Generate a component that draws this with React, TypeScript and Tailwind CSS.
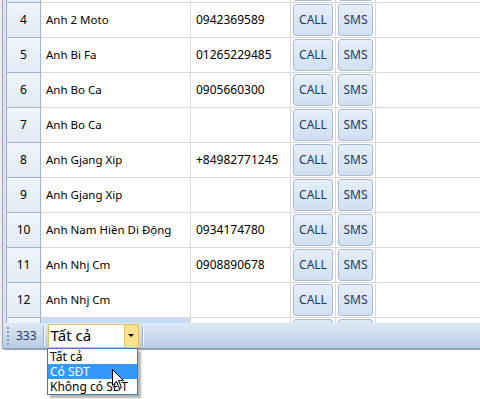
import React from 'react'

type Contact = { no: string; name: string; phone: string }

const rows: Contact[] = [
  { no: '', name: '', phone: '' },
  { no: '4', name: 'Anh 2 Moto', phone: '0942369589' },
  { no: '5', name: 'Anh Bi Fa', phone: '01265229485' },
  { no: '6', name: 'Anh Bo Ca', phone: '0905660300' },
  { no: '7', name: 'Anh Bo Ca', phone: '' },
  { no: '8', name: 'Anh Gjang Xip', phone: '+84982771245' },
  { no: '9', name: 'Anh Gjang Xip', phone: '' },
  { no: '10', name: 'Anh Nam Hiền Di Động', phone: '0934174780' },
  { no: '11', name: 'Anh Nhj Cm', phone: '0908890678' },
  { no: '12', name: 'Anh Nhj Cm', phone: '' },
  { no: '', name: '', phone: '' },
]

function GridButton({ label, className }: { label: string; className: string }) {
  return (
    <div
      className={`${className} h-full rounded-[3px] border border-[#aabcd5] bg-gradient-to-b from-[#e6eff9] to-[#d0dff0] flex items-center justify-center text-[#1e3a64] text-[12px]`}
    >
      {label}
    </div>
  )
}

function Row({ row, selected }: { row: Contact; selected?: boolean }) {
  return (
    <div className="flex h-[35px]">
      <div className="w-[35px] shrink-0 border-l border-r border-b border-[#9fb4d0] bg-gradient-to-b from-[#f0f5fb] to-[#e2eaf5] flex items-center justify-center text-[12px] text-black">
        {row.no}
      </div>
      <div
        className={`w-[150px] shrink-0 border-r border-b border-[#d9d9d9] flex items-center pl-[5px] text-[11.5px] text-black whitespace-nowrap ${
          selected ? 'bg-[#c4dcf6]' : ''
        }`}
      >
        {row.name}
      </div>
      <div className="w-[100px] shrink-0 border-r border-b border-[#d9d9d9] flex items-center pl-[5px] text-[12px] text-black">
        {row.phone}
      </div>
      <div className="w-[45px] shrink-0 border-r border-b border-[#d9d9d9] pl-[2px] py-[1px]">
        {row.no && <GridButton label="CALL" className="w-[40px]" />}
        {!row.no && <div className="w-[40px] h-full rounded-[3px] border border-[#aabcd5] bg-[#dde8f5]" />}
      </div>
      <div className="w-[40px] shrink-0 border-r border-b border-[#d9d9d9] pl-[2px] py-[1px]">
        {row.no && <GridButton label="SMS" className="w-[35px]" />}
        {!row.no && <div className="w-[35px] h-full rounded-[3px] border border-[#aabcd5] bg-[#dde8f5]" />}
      </div>
      <div className="flex-1 border-b border-[#d9d9d9]" />
    </div>
  )
}

export default function App() {
  return (
    <div className="relative w-[480px] h-[399px] bg-white overflow-hidden font-['Noto_Sans',sans-serif]">
      <div className="flex h-[350px]">
        <div className="w-[2px] shrink-0 bg-[#ececec]" />
        <div className="flex-1 flex flex-col border-l border-b border-[#9aa6b8] rounded-bl-[3px] overflow-hidden">
          <div className="flex h-[323px]">
            <div className="w-[3px] shrink-0 bg-[#dde2e8]" />
            <div className="flex-1 overflow-hidden">
              <div className="mt-[-32px]">
                {rows.map((r, i) => (
                  <Row key={i} row={r} selected={i === rows.length - 1} />
                ))}
              </div>
            </div>
          </div>
          <div className="flex items-center h-[26px] border-b border-[#8a9fbe] bg-gradient-to-b from-[#dfe9f6] to-[#b7cbe3]">
            <div className="flex flex-col gap-[2px] ml-[4px] w-[2px]">
              {[0, 1, 2, 3, 4].map((i) => (
                <div key={i} className="w-[2px] h-[2px] bg-[#8699b5]" />
              ))}
            </div>
            <span className="ml-[7px] text-[12px] text-[#243b63]">333</span>
            <div className="ml-[6px] h-[20px] w-[2px] border-l border-[#9aaec9] border-r-white border-r" />
            <div className="ml-[3px] flex h-[24px] w-[91px] border border-[#e5c365] bg-white">
              <div className="flex-1 flex items-center pl-[2px] text-[15px] text-black">Tất cả</div>
              <div className="w-[14px] border-l border-[#e5c365] bg-[#ffe18e] flex items-center justify-center">
                <div className="w-0 h-0 border-l-[3px] border-r-[3px] border-t-[3px] border-l-transparent border-r-transparent border-t-black" />
              </div>
            </div>
            <div className="ml-[3px] h-[20px] w-[2px] border-l border-[#9aaec9] border-r-white border-r" />
          </div>
        </div>
      </div>

      <div className="absolute left-[47px] top-[348px] w-[91px] border border-[#4a78b5] bg-white shadow-[3px_3px_2px_rgba(0,0,0,0.3)] text-[12px] text-black">
        <div className="pl-[2px] h-[15px] leading-[15px]">Tất cả</div>
        <div className="pl-[2px] h-[15px] leading-[15px] bg-[#3399ff] text-white">Có SĐT</div>
        <div className="pl-[2px] h-[15px] leading-[15px] whitespace-nowrap">Không có SĐT</div>
      </div>

      <svg className="absolute left-[112px] top-[369px]" width="13" height="21" viewBox="0 0 13 21">
        <path d="M0.5 0.5 L0.5 16.5 L4.5 12.5 L7.5 19.5 L9.5 18.5 L6.5 11.5 L11.5 11.5 Z" fill="white" stroke="black" strokeWidth="1" />
      </svg>
    </div>
  )
}
